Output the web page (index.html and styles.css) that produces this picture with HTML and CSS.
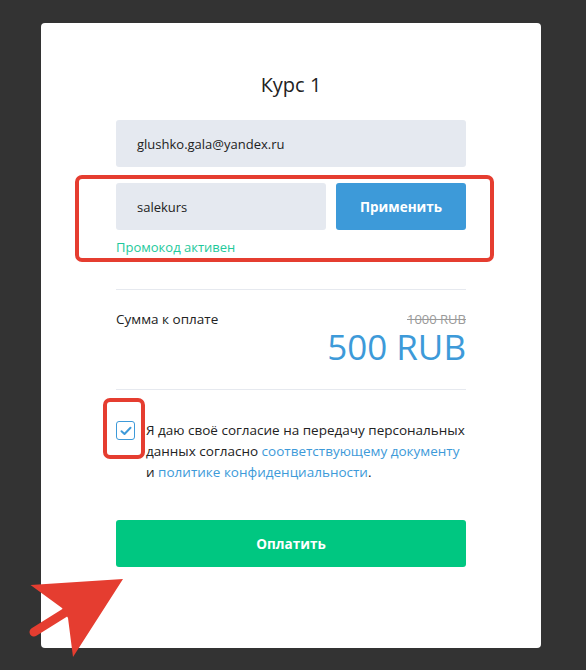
FILE: index.html
```html
<!DOCTYPE html>
<html lang="ru">
<head>
<meta charset="utf-8">
<link rel="stylesheet" href="styles.css">
</head>
<body>
<div class="card">
  <h1 class="title">Курс 1</h1>
  <div class="field">glushko.gala@yandex.ru</div>
  <div class="promo">
    <div class="promo-row">
      <div class="field promo-field">salekurs</div>
      <button class="btn-apply">Применить</button>
    </div>
    <div class="promo-status">Промокод активен</div>
    <div class="mark mark-promo"></div>
  </div>
  <div class="sum">
    <div class="sum-label">Сумма к оплате</div>
    <div class="sum-prices">
      <div class="old-price">1000 RUB</div>
      <div class="new-price">500 RUB</div>
    </div>
  </div>
  <div class="consent">
    <div class="check-wrap">
      <span class="check">
        <svg width="12" height="10" viewBox="0 0 12 10"><path d="M1.5 5.2 L4.5 8 L10.5 1.8" fill="none" stroke="#3d9ad9" stroke-width="2" stroke-linecap="round" stroke-linejoin="round"/></svg>
      </span>
      <div class="mark mark-check"></div>
    </div>
    <p class="consent-text">Я даю своё согласие на передачу персональных данных согласно <a href="#">соответствующему документу</a> и <a href="#">политике конфиденциальности</a>.</p>
  </div>
  <button class="btn-pay">Оплатить</button>
</div>
<svg class="arrow" width="130" height="90" viewBox="0 0 130 90">
  <line x1="34" y1="52" x2="66" y2="32" stroke="#e53d30" stroke-width="9" stroke-linecap="round"/>
  <path d="M30.5 5 L123 -1 L73 77 L68 38 L62 28 Z" fill="#e53d30"/>
</svg>
</body>
</html>
```
FILE: styles.css
```css
* { box-sizing: border-box; }
body {
  margin: 0;
  background: #333333;
  font-family: "Open Sans", "Noto Sans", sans-serif;
  color: #222;
  padding-top: 23px;
  height: 670px;
  overflow: hidden;
}
.card {
  width: 500px;
  height: 625px;
  margin-left: 41px;
  background: #fff;
  border-radius: 4px;
  padding: 48px 75px 0;
}
.title {
  margin: 0;
  text-align: center;
  font-size: 20px;
  font-weight: 400;
  line-height: 28px;
  color: #222;
}
.field {
  margin-top: 21px;
  height: 47px;
  background: #e5e9f0;
  border-radius: 3px;
  padding-left: 21px;
  display: flex;
  align-items: center;
  font-size: 13px;
  color: #222;
}
.promo {
  position: relative;
  margin-top: 16px;
}
.promo-row {
  display: flex;
  gap: 10px;
}
.promo-field {
  margin-top: 0;
  width: 210px;
}
.btn-apply {
  width: 130px;
  height: 47px;
  border: 0;
  border-radius: 3px;
  background: #3d9ad9;
  color: #fff;
  font-family: inherit;
  font-weight: 700;
  font-size: 13.5px;
}
.promo-status {
  margin-top: 8px;
  font-size: 13px;
  line-height: 18px;
  color: #1ec99b;
}
.mark {
  position: absolute;
  border: 4px solid #e53d30;
  border-radius: 7px;
}
.mark-promo {
  left: -41px;
  top: -8px;
  width: 419px;
  height: 87px;
}
.sum {
  margin-top: 33px;
  border-top: 1px solid #e6e9ef;
  border-bottom: 1px solid #e6e9ef;
  padding: 19px 0 24px;
  display: flex;
  justify-content: space-between;
}
.sum-label {
  font-size: 13.5px;
  line-height: 20px;
}
.sum-prices {
  text-align: right;
}
.old-price {
  font-size: 13px;
  line-height: 20px;
  color: #9a9a9a;
  text-decoration: line-through;
}
.new-price {
  font-size: 35px;
  line-height: 36px;
  color: #3d9ad9;
}
.consent {
  display: flex;
  margin-top: 30px;
}
.check-wrap {
  position: relative;
  width: 30px;
  flex: none;
  padding-top: 1px;
}
.check {
  display: flex;
  align-items: center;
  justify-content: center;
  width: 19px;
  height: 19px;
  border: 1px solid #3d9ad9;
  border-radius: 3px;
}
.mark-check {
  left: -13px;
  top: -22px;
  width: 42px;
  height: 61px;
}
.consent-text {
  margin: 0;
  font-size: 13.5px;
  line-height: 21px;
  color: #222;
}
.consent-text a {
  color: #3d9ad9;
  text-decoration: none;
}
.btn-pay {
  display: block;
  margin-top: 37px;
  width: 350px;
  height: 47px;
  border: 0;
  border-radius: 3px;
  background: #00c781;
  color: #fff;
  font-family: inherit;
  font-weight: 700;
  font-size: 13.5px;
}
.arrow {
  position: absolute;
  left: 0;
  top: 580px;
  overflow: visible;
}
```
